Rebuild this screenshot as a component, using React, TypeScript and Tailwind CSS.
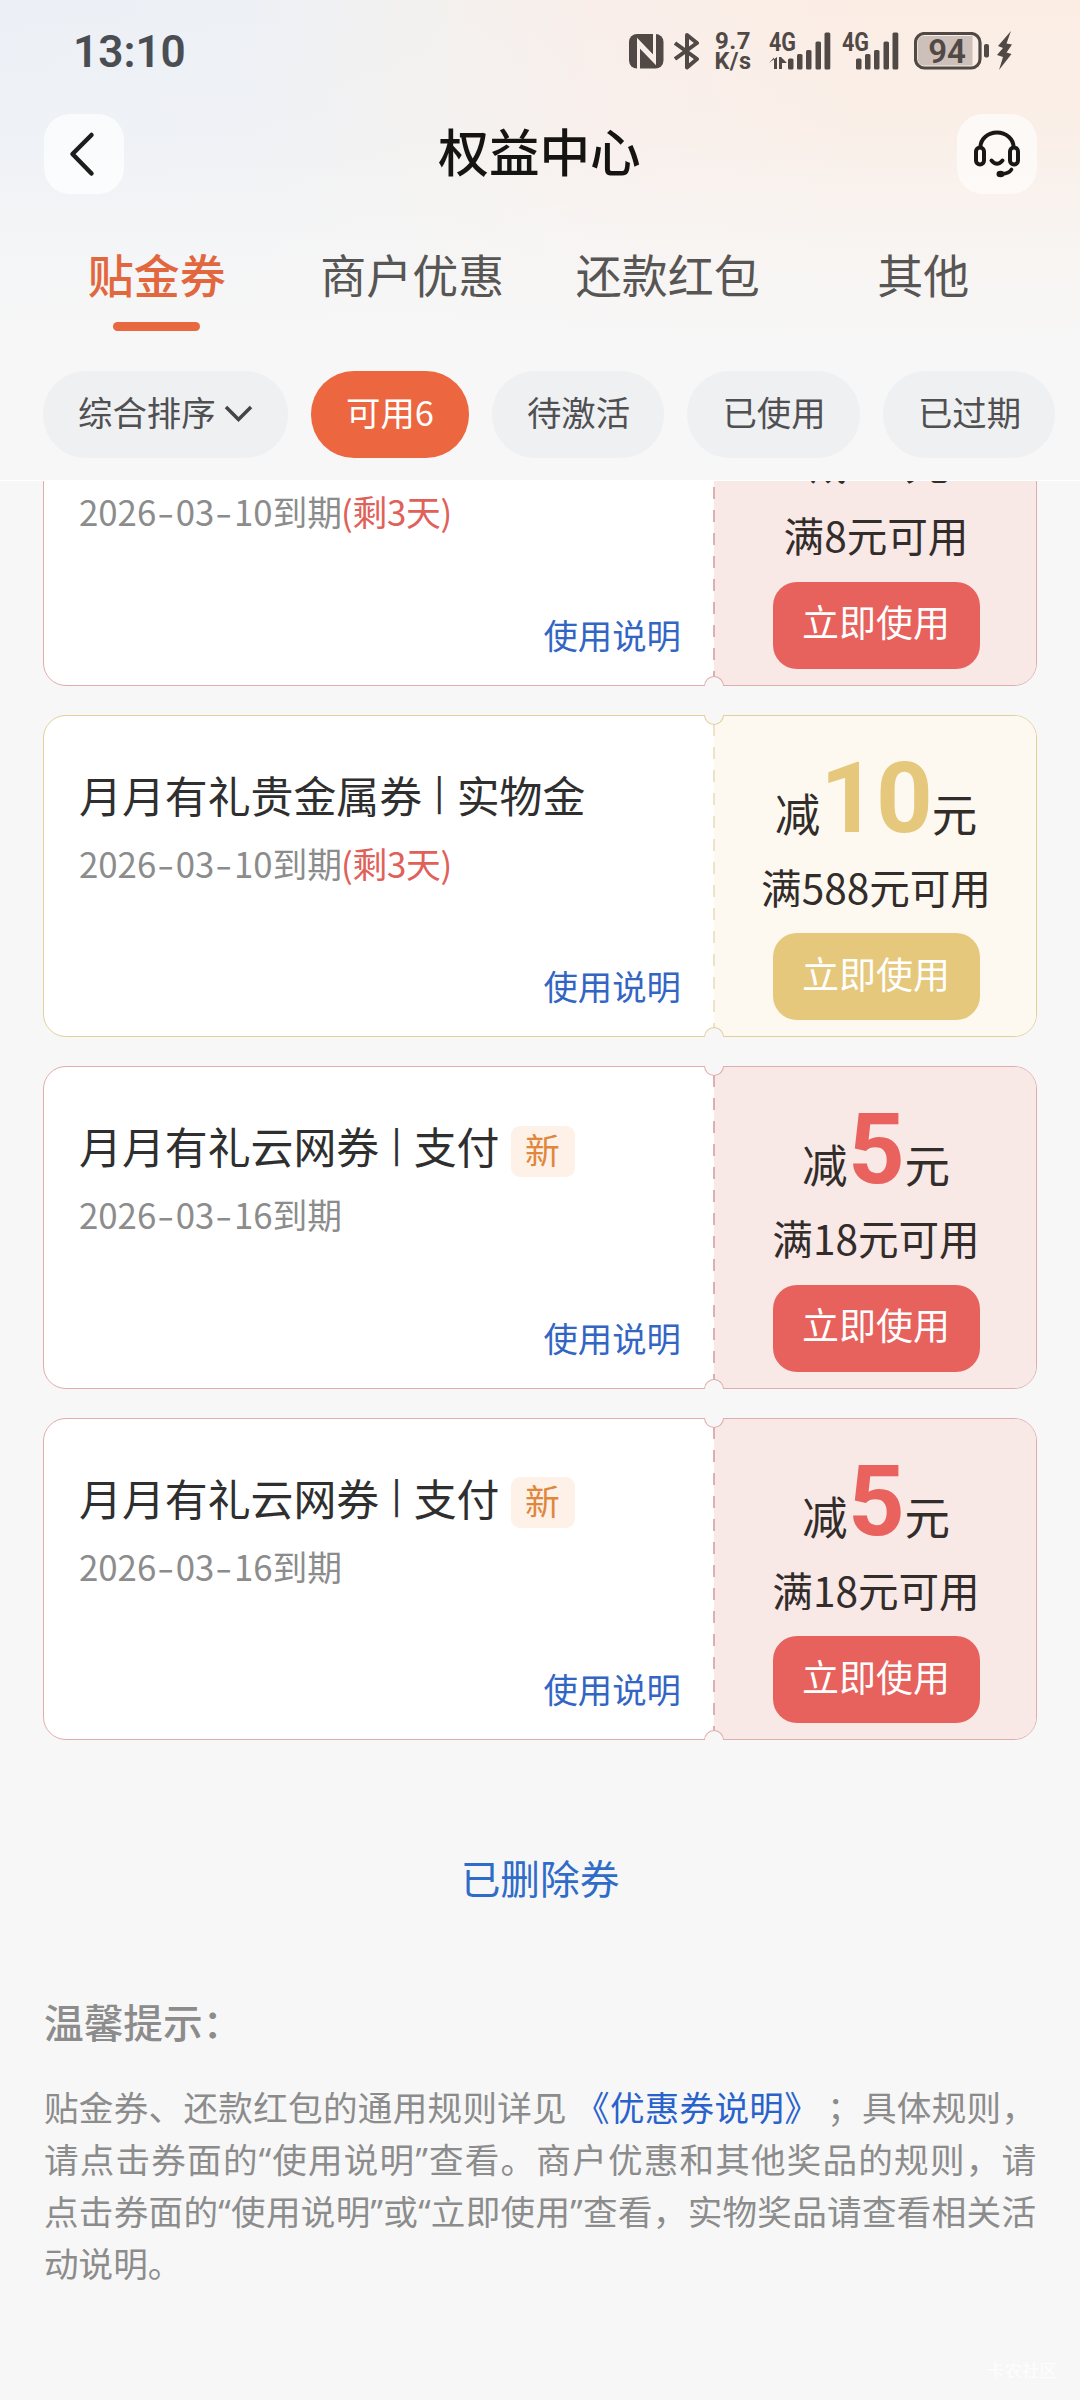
import React from "react";

type Theme = "red" | "gold";

interface Coupon {
  title?: string;
  kind?: string;
  date: string;
  left?: string;
  isNew?: boolean;
  amount?: string;
  condition: string;
  theme: Theme;
}

const coupons: Coupon[] = [
  { date: "2026-03-10", left: "(剩3天)", condition: "满8元可用", theme: "red" },
  {
    title: "月月有礼贵金属券",
    kind: "实物金",
    date: "2026-03-10",
    left: "(剩3天)",
    amount: "10",
    condition: "满588元可用",
    theme: "gold",
  },
  { title: "月月有礼云网券", kind: "支付", date: "2026-03-16", isNew: true, amount: "5", condition: "满18元可用", theme: "red" },
  { title: "月月有礼云网券", kind: "支付", date: "2026-03-16", isNew: true, amount: "5", condition: "满18元可用", theme: "red" },
];

const themes = {
  red: {
    border: "border-[#dfadaa]",
    side: "bg-[#f8e8e6]",
    dash: "bg-[repeating-linear-gradient(to_bottom,#dcb0b0_0_12px,transparent_12px_23px)]",
    amount: "text-[#e9625e]",
    button: "bg-[#e8625d]",
  },
  gold: {
    border: "border-[#e3cf98]",
    side: "bg-[#fdf9f0]",
    dash: "bg-[repeating-linear-gradient(to_bottom,#eee3c8_0_12px,transparent_12px_23px)]",
    amount: "text-[#e5c87b]",
    button: "bg-[#e5c87b]",
  },
};

function Bars({ extra }: { extra?: boolean }) {
  return (
    <svg className="overflow-visible" width="62" height="38" viewBox="0 0 62 38" fill="#504946">
      <text x="0" y="19" fontSize="26" fontWeight="700" fontFamily="Roboto, sans-serif" textLength="27" lengthAdjust="spacingAndGlyphs">
        4G
      </text>
      {extra && <path d="M0 31 L5 25.5 V37 H8 V25 L0 31Z M10 37 V25 H12 L18 31 H13 V37Z" />}
      <rect x={extra ? 19 : 14} y="26.5" width="5.5" height="11" rx="1.5" />
      <rect x={extra ? 28 : 23} y="22" width="5.5" height="15.5" rx="1.5" />
      <rect x={extra ? 37 : 32} y="18" width="5.5" height="19.5" rx="1.5" />
      <rect x={extra ? 46.5 : 41.5} y="9.5" width="5.5" height="28" rx="1.5" />
      <rect x={extra ? 55.5 : 50.5} y="0.5" width="5.8" height="37" rx="1.5" />
    </svg>
  );
}

function StatusBar() {
  return (
    <div className="flex h-[104px] items-start pl-[73px] pr-[67px] text-[#4a4d52]">
      <div className="mt-[29px] origin-left scale-x-[0.98] font-[Roboto,sans-serif] text-[45px] font-semibold leading-[46px]">
        13:10
      </div>
      <div className="ml-auto mt-[32px] flex h-[38px] items-start text-[#504946]">
        <svg className="mt-[2px]" width="35" height="35" viewBox="0 0 35 35">
          <rect width="34.5" height="34.5" rx="8" fill="#504946" />
          <path d="M9.5 35 V7.5 L24.5 23" fill="none" stroke="#f9eee8" strokeWidth="3" />
          <path d="M25.5 0 V27.5 L10.5 12" fill="none" stroke="#f9eee8" strokeWidth="3" />
        </svg>
        <svg className="ml-[10px]" width="26" height="38" viewBox="0 0 26 38" fill="none" stroke="#504946" strokeWidth="4" strokeLinejoin="round">
          <path d="M1 11 L23 27 L13 35.5 V3 L23 11 L1 27" />
        </svg>
        <div className="-mt-[1px] ml-[13px] flex w-[40px] flex-col items-center font-[Roboto,sans-serif] font-bold">
          <span className="text-[24px] leading-[20px] tracking-[0.5px]">9.7</span>
          <span className="text-[23.5px] leading-[20px] tracking-[0.5px]">K/s</span>
        </div>
        <div className="ml-[16px] w-[62px]">
          <Bars extra />
        </div>
        <div className="ml-[11px] w-[60px]">
          <Bars />
        </div>
        <svg className="ml-[12px]" width="76" height="38" viewBox="0 0 76 38">
          <rect x="1.5" y="1.5" width="64.5" height="34.5" rx="9" fill="none" stroke="#504946" strokeWidth="3.2" />
          <path d="M10 4 H58.5 V33.5 H10 Q4 33.5 4 27.5 V10 Q4 4 10 4Z" fill="#cdbfb9" />
          <text x="33" y="30.5" fontSize="33" fontWeight="600" textAnchor="middle" fontFamily="Roboto, sans-serif" fill="#504946">
            94
          </text>
          <rect x="70" y="12" width="5" height="13.5" rx="2" fill="#504946" />
        </svg>
        <svg className="ml-[7px] overflow-visible" width="16" height="39" viewBox="0 0 16 39" fill="#504946">
          <path d="M14 -1 L1 14 L6 16 L0 23 L6 25 L2 38 L14.5 22 L9.5 20.5 L15 12.5 L9.5 11.5Z" />
        </svg>
      </div>
    </div>
  );
}

function NavBar() {
  return (
    <div className="flex items-center justify-between pl-[44px] pr-[43px] pt-[10px]">
      <button className="flex size-[80px] items-center justify-center rounded-[26px] bg-white/70">
        <svg className="-ml-[4px]" width="28" height="46" viewBox="0 0 28 46" fill="none" stroke="#1d1d1d" strokeWidth="4.5" strokeLinecap="round" strokeLinejoin="round">
          <path d="M23.5 4 L4.5 23 L23.5 42.5" />
        </svg>
      </button>
      <h1 className="-mt-[8px] -ml-[2px] text-[50.6px] font-medium leading-[60px] text-[#161412]">权益中心</h1>
      <button className="flex size-[80px] items-center justify-center rounded-[26px] bg-white/60">
        <svg width="48" height="48" viewBox="0 0 48 48" fill="none" stroke="#1a1816" strokeWidth="4" strokeLinecap="round">
          <path d="M7.5 17 A16.5 14.5 0 0 1 40.5 17" />
          <rect x="3" y="17.5" width="8" height="17" rx="4" />
          <rect x="37" y="17.5" width="8" height="17" rx="4" />
          <path d="M18.5 30.5 Q24 37 29.5 30.5" />
          <path d="M38.5 39.5 Q36 43.5 29 44" strokeWidth="3.6" />
          <ellipse cx="27.5" cy="44" rx="2" ry="1.2" />
        </svg>
      </button>
    </div>
  );
}

function Tabs() {
  return (
    <div className="grid grid-cols-4 px-[29px] pt-[47px] text-[46px] leading-[64px] text-[#585654]">
      <div className="flex flex-col items-center font-medium text-[#e2673f]">
        贴金券
        <span className="mt-[17px] h-[9px] w-[87px] rounded-full bg-[#e8683f]" />
      </div>
      <div className="text-center">商户优惠</div>
      <div className="text-center">还款红包</div>
      <div className="text-center">其他</div>
    </div>
  );
}

const pill = "flex h-[87px] shrink-0 items-center justify-center rounded-[43px] bg-[#eff0f2] pb-[8px] pl-[1px]";

function Filters() {
  return (
    <div className="mt-[40px] flex gap-[23px] pl-[43px] text-[34.4px] leading-[50px] text-[#505052]">
      <div className="flex h-[87px] w-[245px] shrink-0 items-center rounded-[43px] bg-[#eff0f2] pb-[8px] pl-[35px]">
        综合排序
        <svg className="ml-[8px] mt-[7px]" width="29" height="18" viewBox="0 0 29 18" fill="none" stroke="#454547" strokeWidth="3.5">
          <path d="M2 2 L14.5 14.5 L27 2" />
        </svg>
      </div>
      <div className="flex h-[87px] w-[158px] shrink-0 items-center justify-center rounded-[43px] bg-[#ec673f] pb-[8px] text-white">可用6</div>
      <div className={`${pill} w-[172px]`}>待激活</div>
      <div className={`${pill} w-[173px]`}>已使用</div>
      <div className={`${pill} w-[172px]`}>已过期</div>
    </div>
  );
}

function DateText({ value }: { value: string }) {
  return (
    <>
      {value.split("-").map((part, i) => (
        <React.Fragment key={i}>
          {i > 0 && <span className="inline-block w-[19.5px] scale-x-[1.4] text-center">-</span>}
          {part}
        </React.Fragment>
      ))}
    </>
  );
}

function CouponCard({ c }: { c: Coupon }) {
  const t = themes[c.theme];
  return (
    <article className={`relative flex h-[322.5px] shrink-0 rounded-[23px] border bg-white ${t.border}`}>
      <div className="flex w-[670px] flex-col pl-[35px] pr-[33px] pt-[48px] pb-[26px]">
        <div className="flex h-[60px] items-center text-[42.9px] leading-[60px] text-[#2f2f2f]">
          {c.title && (
            <>
              <span>{c.title}</span>
              <span className="-mt-[5px] w-[34.5px] text-center text-[34px] font-medium">|</span>
              <span>{c.kind}</span>
            </>
          )}
          {c.isNew && (
            <span className="ml-[11px] mt-[12px] flex h-[51px] w-[64px] items-center justify-center rounded-[9px] bg-[#fdf1e8] pb-[5px] text-[34.8px] text-[#e0873c]">
              新
            </span>
          )}
        </div>
        <div className="mt-[14px] text-[34.8px] leading-[50px] text-[#8c8c8c]">
          <DateText value={c.date} />
          到期
          {c.left && <span className="-ml-px tracking-[-0.3px] text-[#e0605a]">{c.left}</span>}
        </div>
        <a className="mt-auto self-end text-[34.4px] leading-[50px] text-[#3366c4]">使用说明</a>
      </div>
      <div className={`flex flex-1 flex-col items-center rounded-r-[22px] pl-[2px] pt-[32px] text-[#322c2a] ${t.side}`}>
        <div className="flex h-[100px] items-baseline text-[45.5px] leading-none">
          <span>减</span>
          <span className={`flex min-w-[57px] justify-center font-[Roboto,sans-serif] text-[99px] font-bold leading-[100px] tracking-[-1px] ${t.amount}`}>
            {c.amount ?? "\u00a0"}
          </span>
          <span>元</span>
        </div>
        <div className="mt-[14px] text-[40.6px] leading-[50px]">{c.condition}</div>
        <button className={`mt-[21.5px] h-[87px] w-[207px] rounded-[24px] pb-[8px] text-[37px] leading-[50px] text-white ${t.button}`}>立即使用</button>
      </div>
      <span className={`absolute bottom-[8px] left-[669px] top-[8px] w-[2px] ${t.dash}`} />
      <span className={`absolute -top-px left-[660px] h-[10px] w-[20px] rounded-b-full border border-t-0 bg-[#f7f7f7] ${t.border}`} />
      <span className={`absolute -bottom-px left-[660px] h-[10px] w-[20px] rounded-t-full border border-b-0 bg-[#f7f7f7] ${t.border}`} />
    </article>
  );
}

function Quote({ children }: { children: string }) {
  return (
    <span className="font-['Noto_Sans',sans-serif]">
      “<span className="font-['Noto_Sans_CJK_SC',sans-serif]">{children}</span>”
    </span>
  );
}

function Tips() {
  return (
    <section className="mt-[84px] px-[44px] text-[#8c8c8c]">
      <h2 className="text-[39.7px] font-medium leading-[60px]">温馨提示：</h2>
      <div className="mt-[29px] whitespace-nowrap text-[34.6px] leading-[52px]">
        <p className="h-[52px] [text-align-last:justify]">
          贴金券、还款红包的通用规则详见 <a className="text-[#2a62cc]">《优惠券说明》</a> ；具体规则，
        </p>
        <p className="h-[52px] [text-align-last:justify]">
          请点击券面的<Quote>使用说明</Quote>查看。商户优惠和其他奖品的规则，请
        </p>
        <p className="h-[52px] [text-align-last:justify]">
          点击券面的<Quote>使用说明</Quote>或<Quote>立即使用</Quote>查看，实物奖品请查看相关活
        </p>
        <p className="h-[52px]">动说明。</p>
      </div>
    </section>
  );
}

export default function App() {
  return (
    <div
      lang="zh-CN"
      className="relative flex h-[2400px] w-[1080px] flex-col overflow-hidden bg-[#f7f7f7] font-['Noto_Sans_CJK_SC',sans-serif]"
    >
      <header className="h-[480px] shrink-0 bg-[linear-gradient(to_bottom,rgba(247,247,247,0)_0,rgba(247,247,247,0.2)_130px,rgba(247,247,247,0.7)_240px,#f7f7f7_350px),linear-gradient(to_right,#ecf0f6_0%,#edf0f5_22%,#f3f1ef_40%,#f9eeea_55%,#fbede4_80%)]">
        <StatusBar />
        <NavBar />
        <Tabs />
        <Filters />
      </header>
      <main className="flex flex-col overflow-hidden border-t border-white">
        <div className="-mt-[118px] flex flex-col gap-[29px] px-[43px]">
          {coupons.map((c, i) => (
            <CouponCard key={i} c={c} />
          ))}
        </div>
        <a className="mt-[107px] text-center text-[39.7px] leading-[60px] text-[#2f6bc8]">已删除券</a>
        <Tips />
      </main>
      <span className="absolute bottom-[18px] right-[23px] text-[17.5px] leading-[24px] text-white/80">卡农社区</span>
    </div>
  );
}
